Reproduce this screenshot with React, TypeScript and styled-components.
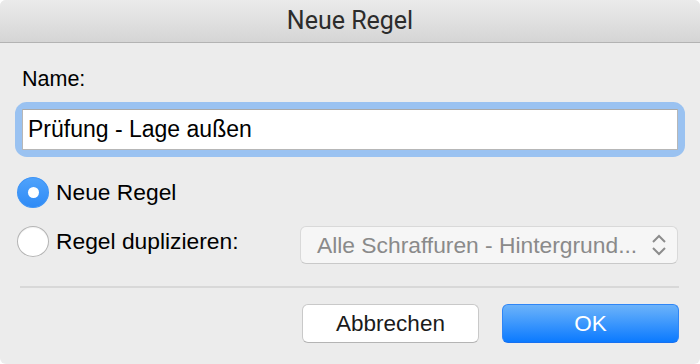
import React, { useState } from "react";
import styled, { createGlobalStyle } from "styled-components";

const GlobalStyle = createGlobalStyle`
  html, body {
    margin: 0;
    padding: 0;
    background: #ffffff;
  }
  * {
    box-sizing: border-box;
  }
`;

const Window = styled.div`
  width: 700px;
  height: 364px;
  display: flex;
  flex-direction: column;
  background: #ececec;
  border-radius: 6px;
  overflow: hidden;
  font-family: "Liberation Sans", Arial, sans-serif;
  color: #000;
`;

const TitleBar = styled.div`
  height: 43px;
  flex: none;
  display: flex;
  align-items: center;
  justify-content: center;
  background: linear-gradient(#ebebeb, #d5d5d5);
  border-bottom: 1px solid #b3b3b3;
  font-family: Roboto, "Liberation Sans", sans-serif;
  font-size: 25px;
  color: #2c2c2c;
  padding-bottom: 1px;
`;

const Body = styled.div`
  flex: 1;
  display: flex;
  flex-direction: column;
  padding: 24px 21px 0 22px;
`;

const Label = styled.div`
  font-size: 21.5px;
  line-height: 24px;
  margin-bottom: 18px;
`;

const FocusRing = styled.div`
  margin-right: 1px;
  border-radius: 5px;
  box-shadow: 0 0 0 7px #9ac2f1;
  background: #9ac2f1;
`;

const TextField = styled.input`
  display: block;
  width: 100%;
  height: 41px;
  border: 1px solid #b7b7b7;
  border-top-color: #a9a9a9;
  background: #fff;
  padding: 0 5px;
  font-family: "Liberation Sans", Arial, sans-serif;
  font-size: 23px;
  color: #000;
  outline: none;
`;

const Options = styled.div`
  display: flex;
  flex-direction: column;
  gap: 18px;
  margin-top: 27px;
  margin-left: -5px;
`;

const OptionRow = styled.div`
  display: flex;
  align-items: center;
  height: 31px;
`;

const RadioLabel = styled.label`
  display: flex;
  align-items: center;
  gap: 7px;
  font-size: 22.8px;
  width: 283px;
  cursor: default;
`;

const RadioCircle = styled.span<{ $checked: boolean }>`
  width: 32px;
  height: 31px;
  border-radius: 50%;
  flex: none;
  display: flex;
  align-items: center;
  justify-content: center;
  background: ${(p) => (p.$checked ? "linear-gradient(#4fa2fb, #2f8bf6)" : "#fff")};
  border: 1px solid ${(p) => (p.$checked ? "#3c93f6" : "#b5b5b5")};
  box-shadow: ${(p) => (p.$checked ? "none" : "inset 0 1px 1px rgba(0,0,0,0.05)")};

  &::after {
    content: "";
    display: ${(p) => (p.$checked ? "block" : "none")};
    width: 11px;
    height: 11px;
    border-radius: 50%;
    background: #fff;
  }
`;

const Popup = styled.div`
  flex: 1;
  height: 38px;
  margin-top: 7px;
  margin-right: 1px;
  display: flex;
  align-items: center;
  justify-content: space-between;
  padding: 0 10px 0 16px;
  background: #f6f6f6;
  border: 1px solid #d9d9d9;
  border-bottom-color: #c9c9c9;
  border-radius: 6px;
  font-size: 22.8px;
  color: #8a8a8a;
  white-space: nowrap;
`;

const Separator = styled.div`
  height: 2px;
  background: #d8d8d8;
  margin: 29px 0 0 -2px;
`;

const ButtonRow = styled.div`
  display: flex;
  justify-content: flex-end;
  gap: 23px;
  margin-top: 16px;
`;

const Button = styled.button<{ $primary?: boolean }>`
  width: 177px;
  height: 39px;
  border-radius: 6px;
  font-family: "Liberation Sans", Arial, sans-serif;
  font-size: 22.5px;
  border: 1px solid ${(p) => (p.$primary ? "#2f86f6" : "#c9c9c9")};
  border-bottom-color: ${(p) => (p.$primary ? "#1670f0" : "#b4b4b4")};
  background: ${(p) => (p.$primary ? "linear-gradient(#6cb3fa, #0b7aff)" : "#ffffff")};
  color: ${(p) => (p.$primary ? "#ffffff" : "#1a1a1a")};
  padding: 0;
  cursor: default;
`;

const Chevrons = () => (
  <svg width="16" height="24" viewBox="0 0 16 24" fill="none" stroke="#8c8c8c" strokeWidth="2">
    <path d="M2 9 L8 3 L14 9" />
    <path d="M2 15 L8 21 L14 15" />
  </svg>
);

export default function App() {
  const [mode, setMode] = useState<"new" | "dup">("new");
  const [name, setName] = useState("Prüfung - Lage außen");

  return (
    <>
      <GlobalStyle />
      <Window>
        <TitleBar>Neue Regel</TitleBar>
        <Body>
          <Label>Name:</Label>
          <FocusRing>
            <TextField value={name} onChange={(e) => setName(e.target.value)} />
          </FocusRing>
          <Options>
            <OptionRow>
              <RadioLabel onClick={() => setMode("new")}>
                <RadioCircle $checked={mode === "new"} />
                Neue Regel
              </RadioLabel>
            </OptionRow>
            <OptionRow>
              <RadioLabel onClick={() => setMode("dup")}>
                <RadioCircle $checked={mode === "dup"} />
                Regel duplizieren:
              </RadioLabel>
              <Popup>
                Alle Schraffuren - Hintergrund...
                <Chevrons />
              </Popup>
            </OptionRow>
          </Options>
          <Separator />
          <ButtonRow>
            <Button>Abbrechen</Button>
            <Button $primary>OK</Button>
          </ButtonRow>
        </Body>
      </Window>
    </>
  );
}
